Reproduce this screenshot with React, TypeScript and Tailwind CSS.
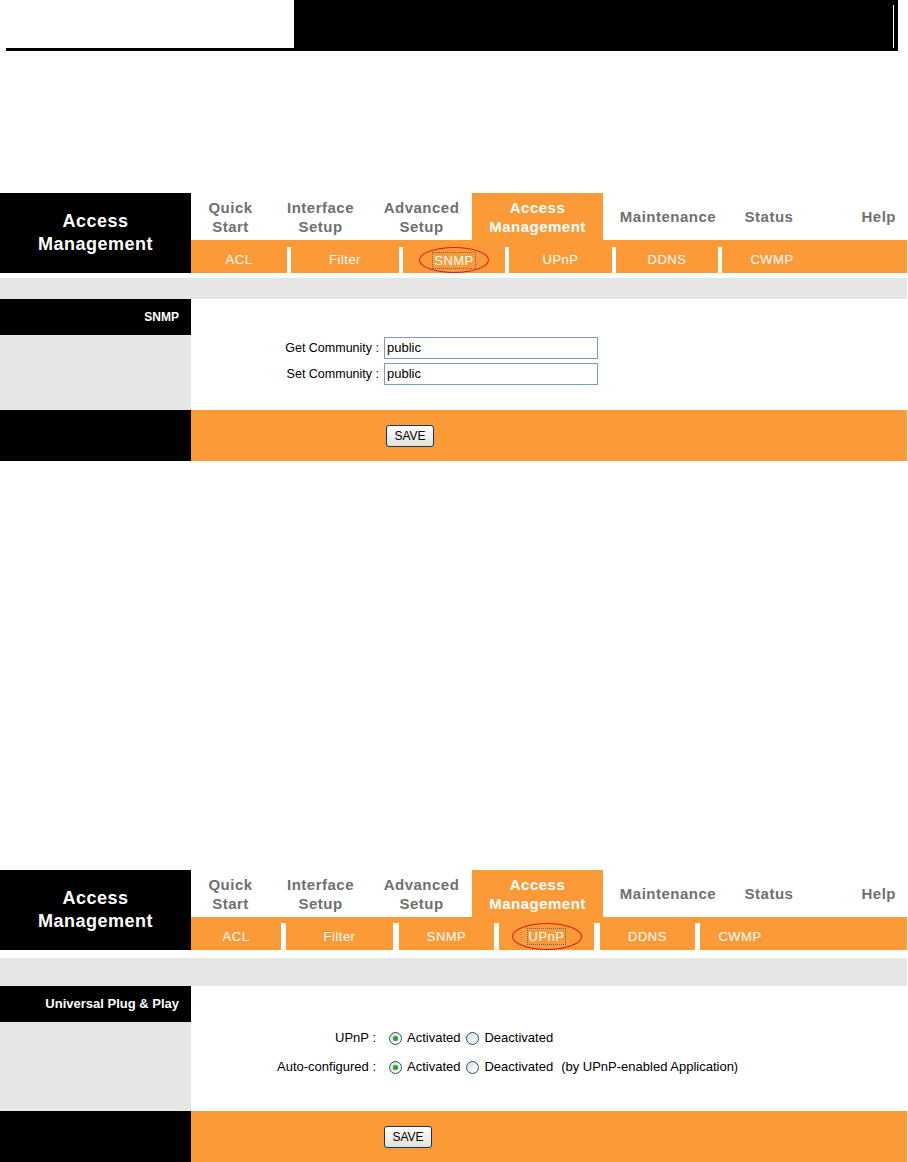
const font = { fontFamily: '"Liberation Sans", Arial, sans-serif' }

type Tab = { top: string; bottom?: string; w: string; active?: boolean; right?: boolean }

const tabs: Tab[] = [
  { top: 'Quick', bottom: 'Start', w: 'w-[79px]' },
  { top: 'Interface', bottom: 'Setup', w: 'w-[101px]' },
  { top: 'Advanced', bottom: 'Setup', w: 'w-[101px]' },
  { top: 'Access', bottom: 'Management', w: 'w-[131px]', active: true },
  { top: 'Maintenance', w: 'w-[130px]' },
  { top: 'Status', w: 'w-[72px]' },
  { top: 'Help', w: 'w-[102px]', right: true },
]

type Sub = { label: string; w: string; sep?: string }

const subsA: Sub[] = [
  { label: 'ACL', w: 'w-[96px]', sep: 'w-[4px]' },
  { label: 'Filter', w: 'w-[108px]', sep: 'w-[4px]' },
  { label: 'SNMP', w: 'w-[102px]', sep: 'w-[4px]' },
  { label: 'UPnP', w: 'w-[103px]', sep: 'w-[4px]' },
  { label: 'DDNS', w: 'w-[102px]', sep: 'w-[4px]' },
  { label: 'CWMP', w: 'w-[100px]' },
]

const subsB: Sub[] = [
  { label: 'ACL', w: 'w-[90px]', sep: 'w-[5px]' },
  { label: 'Filter', w: 'w-[107px]', sep: 'w-[6px]' },
  { label: 'SNMP', w: 'w-[95px]', sep: 'w-[5px]' },
  { label: 'UPnP', w: 'w-[95px]', sep: 'w-[6px]' },
  { label: 'DDNS', w: 'w-[95px]', sep: 'w-[5px]' },
  { label: 'CWMP', w: 'w-[80px]' },
]

function Nav({ subs, circled, subPad }: { subs: Sub[]; circled: string; subPad: string }) {
  return (
    <div className="flex h-[80px]">
      <div className="flex w-[191px] flex-col items-center justify-center bg-black text-[18px] font-bold leading-[23px] tracking-[0.5px] text-white">
        <span>Access</span>
        <span>Management</span>
      </div>
      <div className="flex w-[716px] flex-col">
        <div className="flex flex-1">
          {tabs.map((t) => (
            <div
              key={t.top}
              className={`${t.w} flex flex-col justify-center text-[15px] font-bold leading-[19px] tracking-[0.5px] ${
                t.active ? 'bg-[#fd9a38] text-white' : 'text-[#707070]'
              } ${t.right ? 'items-end pr-[11px]' : 'items-center'}`}
            >
              <span>{t.top}</span>
              {t.bottom && <span>{t.bottom}</span>}
            </div>
          ))}
        </div>
        <div className={`flex h-[33px] bg-[#fd9a38] ${subPad}`}>
          {subs.map((s) => (
            <div key={s.label} className="flex">
              <div className={`${s.w} relative flex items-center justify-center text-[13px] tracking-[0.5px] text-white`}>
                {s.label === circled ? (
                  <>
                    <span className="px-[1px] leading-[15px] outline outline-1 outline-dotted outline-[#4d6d93]">{s.label}</span>
                    <div className="absolute left-1/2 top-0 h-full w-[70px] -translate-x-1/2 rounded-[50%] border-[1.5px] border-[#e5131d]" />
                  </>
                ) : (
                  s.label
                )}
              </div>
              {s.sep && <div className={`${s.sep} bg-white`} />}
            </div>
          ))}
        </div>
      </div>
    </div>
  )
}

function SaveButton() {
  return (
    <button className="h-[22px] w-[48px] rounded-[3px] border border-[#003c74] bg-gradient-to-b from-white to-[#e3e1d6] text-[12px] text-black">
      SAVE
    </button>
  )
}

function Radio({ checked }: { checked?: boolean }) {
  return (
    <span className="flex h-[13px] w-[13px] items-center justify-center rounded-full border border-[#1c5180] bg-gradient-to-br from-[#dcdcd5] to-white">
      {checked && <span className="h-[5px] w-[5px] rounded-full bg-[#2aa52a] shadow-[0_0_1px_#5fd05f]" />}
    </span>
  )
}

function Footer({ pad }: { pad: string }) {
  return (
    <div className="flex h-[51px]">
      <div className="w-[191px] bg-black" />
      <div className={`flex w-[716px] items-center bg-[#fd9a38] ${pad}`}>
        <SaveButton />
      </div>
    </div>
  )
}

function RadioPair() {
  return (
    <>
      <span className="ml-[13px]"><Radio checked /></span>
      <span className="ml-[5px]">Activated</span>
      <span className="ml-[6px]"><Radio /></span>
      <span className="ml-[5px]">Deactivated</span>
    </>
  )
}

export default function App() {
  return (
    <div className="min-h-[1162px] w-[908px] bg-white" style={font}>
      <div className="flex">
        <div className="flex h-[51px] w-[294px] flex-col justify-end">
          <div className="ml-[6px] h-[3px] bg-black" />
        </div>
        <div className="flex h-[51px] w-[604px] justify-end bg-black pr-[4px] pt-[5px]">
          <div className="h-[43px] w-px bg-white" />
        </div>
      </div>

      <div className="mt-[142px]">
        <Nav subs={subsA} circled="SNMP" subPad="pt-[7px]" />
        <div className="mt-[5px] h-[21px] w-[907px] bg-[#e6e6e6]" />
        <div className="flex h-[111px]">
          <div className="flex w-[191px] flex-col bg-[#e6e6e6]">
            <div className="flex h-[36px] items-center justify-end bg-black pr-[12px] text-[12px] font-bold text-white">SNMP</div>
          </div>
          <div className="flex w-[716px] flex-col gap-[4px] pt-[38px] text-[12.5px] text-black">
            {['Get Community', 'Set Community'].map((l) => (
              <div key={l} className="flex items-center">
                <span className="w-[188px] text-right">{l} :</span>
                <div className="ml-[5px] flex h-[22px] w-[214px] items-center border border-[#7f9db9] px-[2px] text-[13px]">public</div>
              </div>
            ))}
          </div>
        </div>
        <Footer pad="pl-[195px]" />
      </div>

      <div className="mt-[409px]">
        <Nav subs={subsB} circled="UPnP" subPad="pt-[6px]" />
        <div className="mt-[8px] h-[28px] w-[907px] bg-[#e6e6e6]" />
        <div className="flex h-[125px]">
          <div className="flex w-[191px] flex-col bg-[#e6e6e6]">
            <div className="flex h-[36px] items-center justify-end bg-black pr-[12px] text-[13px] font-bold text-white">
              Universal Plug &amp; Play
            </div>
          </div>
          <div className="flex w-[716px] flex-col gap-[7px] pt-[41px] text-[13px] text-black">
            <div className="flex h-[22px] items-center">
              <span className="w-[185px] text-right">UPnP :</span>
              <RadioPair />
            </div>
            <div className="flex h-[22px] items-center">
              <span className="w-[185px] text-right">Auto-configured :</span>
              <RadioPair />
              <span className="ml-[8px]">(by UPnP-enabled Application)</span>
            </div>
          </div>
        </div>
        <Footer pad="pl-[193px]" />
      </div>
    </div>
  )
}
